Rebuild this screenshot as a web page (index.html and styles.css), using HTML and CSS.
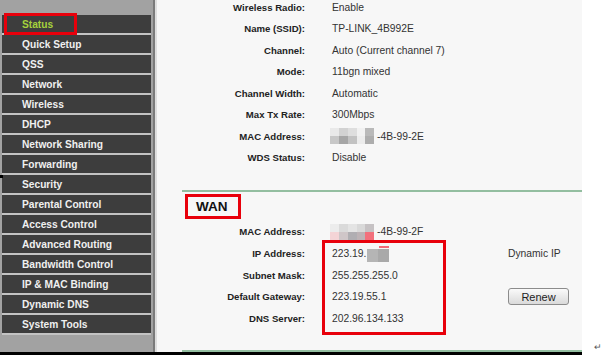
FILE: index.html
```html
<!DOCTYPE html>
<html lang="en">
<head>
    <meta charset="UTF-8">
    <title>Router Status</title>
    <link rel="stylesheet" href="styles.css">
</head>
<body>

<div class="page">
    <div class="frame">
        <ul class="menu">
            <li class="active">Status</li>
            <li>Quick Setup</li>
            <li>QSS</li>
            <li>Network</li>
            <li>Wireless</li>
            <li>DHCP</li>
            <li>Network Sharing</li>
            <li>Forwarding</li>
            <li>Security</li>
            <li>Parental Control</li>
            <li>Access Control</li>
            <li>Advanced Routing</li>
            <li>Bandwidth Control</li>
            <li>IP &amp; MAC Binding</li>
            <li>Dynamic DNS</li>
            <li>System Tools</li>
        </ul>

        <div class="main">
            <div class="rows wireless">
                <div class="label">Wireless Radio:</div><div class="value">Enable</div>
                <div class="label">Name (SSID):</div><div class="value">TP-LINK_4B992E</div>
                <div class="label">Channel:</div><div class="value">Auto (Current channel 7)</div>
                <div class="label">Mode:</div><div class="value">11bgn mixed</div>
                <div class="label">Channel Width:</div><div class="value">Automatic</div>
                <div class="label">Max Tx Rate:</div><div class="value">300Mbps</div>
                <div class="label">MAC Address:</div>
                <div class="value">
                    <svg class="blur" width="44" height="16" viewBox="0 0 44 16">
                        <rect x="0" y="0" width="9" height="8" fill="#e9e9e9"/>
                        <rect x="9" y="0" width="9" height="8" fill="#d2d2d2"/>
                        <rect x="18" y="0" width="9" height="8" fill="#dedede"/>
                        <rect x="27" y="0" width="8" height="8" fill="#f1f1f1"/>
                        <rect x="35" y="0" width="9" height="8" fill="#b9b9b9"/>
                        <rect x="0" y="8" width="9" height="8" fill="#c7c7c7"/>
                        <rect x="9" y="8" width="9" height="8" fill="#a6a6a6"/>
                        <rect x="18" y="8" width="9" height="8" fill="#c2c2c2"/>
                        <rect x="27" y="8" width="8" height="8" fill="#ececec"/>
                        <rect x="35" y="8" width="9" height="8" fill="#adadad"/>
                    </svg>-4B-99-2E
                </div>
                <div class="label">WDS Status:</div><div class="value">Disable</div>
            </div>

            <div class="divider"></div>

            <h2 class="wan-title">WAN</h2>

            <div class="rows wan-rows">
                <div class="label">MAC Address:</div>
                <div class="value">
                    <svg class="blur" width="44" height="16" viewBox="0 0 44 16">
                        <rect x="0" y="0" width="9" height="8" fill="#ececec"/>
                        <rect x="9" y="0" width="9" height="8" fill="#dadada"/>
                        <rect x="18" y="0" width="9" height="8" fill="#e4e4e4"/>
                        <rect x="27" y="0" width="8" height="8" fill="#d9d9d9"/>
                        <rect x="35" y="0" width="9" height="8" fill="#c6c2c4"/>
                        <rect x="0" y="8" width="9" height="8" fill="#f4d4d6"/>
                        <rect x="9" y="8" width="9" height="8" fill="#cfc6c8"/>
                        <rect x="18" y="8" width="9" height="8" fill="#b0aeb2"/>
                        <rect x="27" y="8" width="8" height="8" fill="#bdb3b6"/>
                        <rect x="35" y="8" width="9" height="8" fill="#f2707c"/>
                    </svg>-4B-99-2F
                </div>
                <div class="label">IP Address:</div>
                <div class="value">223.19.<svg class="blur ip" width="22" height="16" viewBox="0 0 22 16">
                        <rect x="12" y="0" width="10" height="2" fill="#f26a78"/>
                        <rect x="0" y="3" width="11" height="13" fill="#b5b5b5"/>
                        <rect x="11" y="3" width="11" height="13" fill="#a9a9a9"/>
                    </svg></div>
                <div class="extra">Dynamic IP</div>
                <div class="label">Subnet Mask:</div><div class="value">255.255.255.0</div>
                <div class="label">Default Gateway:</div><div class="value">223.19.55.1</div>
                <div class="extra"><button class="renew">Renew</button></div>
                <div class="label">DNS Server:</div><div class="value">202.96.134.133</div>

                <div class="highlight"></div>
            </div>

            <div class="divider bottom"></div>
        </div>

        <div class="gutter"><span class="para">&#8629;</span></div>
    </div>
    <div class="rule"></div>
    <div class="tick"></div>
</div>

</body>
</html>
```

FILE: styles.css
```css
body {
    margin: 0;
    background: #ffffff;
    font-family: "Liberation Sans", Arial, sans-serif;
}

.page {
    position: relative;
    width: 611px;
    height: 357px;
    overflow: hidden;
}

.frame {
    display: flex;
    height: 352px;
}

/* left menu */
.menu {
    list-style: none;
    margin: 0;
    padding: 15px 0 0 2px;
    width: 151px;
    background: #a2a2a2;
    border-right: 2px solid #7b7b7b;
}

.menu li {
    position: relative;
    height: 18px;
    line-height: 19px;
    padding-left: 20px;
    background: #3d3d3d;
    border-bottom: 2px solid #c3c3c3;
    color: #f0f0f0;
    font-size: 10.2px;
    font-weight: bold;
    width: 129px;
}

.menu li.active {
    color: #a6d13c;
}

.menu li.active::after {
    content: "";
    position: absolute;
    left: 2px;
    top: -2px;
    width: 67px;
    height: 16px;
    border: 3px solid #e8000b;
}

/* content */
.main {
    width: 425px;
    background: #f7f7f7;
    border-left: 2px solid #dedede;
}

.rows {
    position: relative;
    display: grid;
    grid-template-columns: 175px 176px auto;
    grid-auto-rows: 21.5px;
    align-items: center;
}

.wireless {
    margin-top: -3.75px;
}

.label {
    grid-column: 1;
    padding-right: 27px;
    text-align: right;
    font-size: 9.6px;
    font-weight: bold;
    color: #222222;
}

.value {
    grid-column: 2;
    display: flex;
    align-items: center;
    font-size: 10.3px;
    color: #333333;
}

.extra {
    grid-column: 3;
    font-size: 10.3px;
    color: #333333;
}

.blur {
    display: block;
    margin-left: -2px;
    margin-right: 3px;
}

.blur.ip {
    margin-left: 1px;
}

.divider {
    height: 2px;
    margin: 21.75px 0 0 25px;
    background: #93bea0;
}

.divider.bottom {
    margin-top: 20.8px;
}

.wan-title {
    display: inline-block;
    margin: 2px 0 0 28px;
    padding: 0 10px 0 8px;
    height: 19px;
    line-height: 19px;
    border: 3px solid #e8000b;
    font-size: 13.5px;
    font-weight: bold;
    color: #111111;
}

.wan-rows {
    margin-top: 2.2px;
    grid-auto-rows: 21.6px;
}

.highlight {
    position: absolute;
    left: 165px;
    top: 18.8px;
    width: 118px;
    height: 89px;
    border: 3px solid #e8000b;
}

.renew {
    display: block;
    width: 61px;
    height: 17px;
    padding: 0;
    border: 1px solid #8c8c8c;
    border-radius: 3px;
    background: linear-gradient(#fafafa, #dadada);
    font-family: "Liberation Sans", Arial, sans-serif;
    font-size: 11px;
    color: #222222;
}

.gutter {
    flex: 1;
    display: flex;
    align-items: flex-end;
    justify-content: flex-end;
    padding-right: 9px;
}

.para {
    font-size: 9px;
    line-height: 9px;
    color: #555555;
}

.rule {
    width: 582px;
    height: 3px;
    background: #000000;
}

.tick {
    position: absolute;
    left: 0;
    top: 175px;
    width: 3px;
    height: 3px;
    background: #000000;
}
```
